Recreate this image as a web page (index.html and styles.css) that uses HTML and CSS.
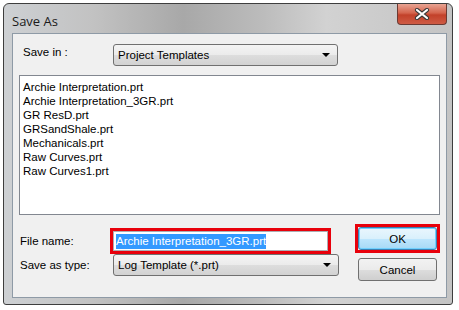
FILE: index.html
```html
<!DOCTYPE html>
<html lang="en">

<head>
  <meta charset="UTF-8">
  <title>Save As</title>
  <link rel="stylesheet" href="styles.css">
</head>

<body>
  <div class="window">
    <div class="titlebar">
      <span class="title">Save As</span>
      <div class="close-btn">
        <svg width="16" height="12" viewBox="0 0 16 12">
          <path d="M3 2 L13 10 M13 2 L3 10" stroke="#3a3a3a" stroke-width="4.2" stroke-linecap="round" />
          <path d="M3 2 L13 10 M13 2 L3 10" stroke="#ffffff" stroke-width="2.2" stroke-linecap="round" />
        </svg>
      </div>
    </div>

    <div class="client">
      <div class="save-in">
        <span class="label save-in-label">Save in :</span>
        <div class="combo combo-wide">
          <span>Project Templates</span>
          <span class="arrow"></span>
        </div>
      </div>

      <div class="file-list">
        <div class="item">Archie Interpretation.prt</div>
        <div class="item">Archie Interpretation_3GR.prt</div>
        <div class="item">GR ResD.prt</div>
        <div class="item">GRSandShale.prt</div>
        <div class="item">Mechanicals.prt</div>
        <div class="item">Raw Curves.prt</div>
        <div class="item">Raw Curves1.prt</div>
      </div>

      <div class="bottom">
        <div class="fields">
          <div class="field-row">
            <span class="label">File name:</span>
            <div class="textbox marked"><span class="selected">Archie Interpretation_3GR.prt</span></div>
          </div>
          <div class="field-row">
            <span class="label">Save as type:</span>
            <div class="combo">
              <span>Log Template (*.prt)</span>
              <span class="arrow"></span>
            </div>
          </div>
        </div>
        <div class="buttons">
          <div class="marked-btn"><div class="btn btn-default">OK</div></div>
          <div class="btn">Cancel</div>
        </div>
      </div>
    </div>
  </div>
</body>

</html>
```

FILE: styles.css
```css
body {
  margin: 0;
  padding: 3px;
  background: #ffffff;
  font-family: 'Liberation Sans', Arial, sans-serif;
  font-size: 11.5px;
  color: #000;
}

.window {
  width: 435px;
  height: 294px;
  border: 1px solid #3e3e3e;
  border-radius: 6px 6px 3px 3px;
  background: linear-gradient(90deg, #cdd0d3 0%, #c2c2c2 20%, #a8a8a8 40%, #bcbcbc 58%, #d2d2d2 72%, #c4c4c4 100%);
  padding: 0 5px 6px 8px;
  display: flex;
  flex-direction: column;
}

.titlebar {
  height: 29px;
  display: flex;
  align-items: flex-start;
  justify-content: space-between;
}

.title {
  font-family: 'Open Sans', sans-serif;
  font-size: 13px;
  color: #1a1a1a;
  margin-top: 8px;
}

.close-btn {
  width: 48px;
  height: 20px;
  border: 1px solid #6b3a33;
  border-top: none;
  border-radius: 0 0 4px 4px;
  background: linear-gradient(180deg, #e8a493 0%, #d4644d 45%, #c2412a 55%, #cf5b44 100%);
  display: flex;
  align-items: center;
  justify-content: center;
}

.client {
  flex: 1;
  border: 1px solid #8e9aa6;
  background: #f0f0f0;
  padding: 10px 6px 0 6px;
}

.save-in {
  display: flex;
  align-items: center;
  height: 22px;
}

.label {
  color: #000;
}

.save-in-label {
  width: 90px;
  padding-left: 4px;
  margin-top: -6px;
}

.combo {
  width: 213px;
  height: 20px;
  border: 1px solid #707070;
  border-radius: 3px;
  background: linear-gradient(180deg, #f4f4f4 0%, #ebebeb 50%, #dddddd 51%, #d2d2d2 100%);
  display: flex;
  align-items: center;
  justify-content: space-between;
  padding: 0 7px 0 4px;
}

.combo-wide {
  width: 212px;
}

.arrow {
  width: 0;
  height: 0;
  border-left: 4px solid transparent;
  border-right: 4px solid transparent;
  border-top: 4px solid #000;
}

.file-list {
  margin-top: 9px;
  height: 134px;
  border: 1px solid #828790;
  background: #fff;
  padding: 4px 3px 0 3px;
}

.item {
  height: 14px;
  line-height: 14px;
}

.bottom {
  display: flex;
  margin-top: 14px;
}

.fields {
  width: 339px;
}

.field-row {
  display: flex;
  align-items: center;
  height: 24px;
}

.field-row .label {
  width: 93px;
  padding-left: 1px;
}

.textbox {
  width: 209px;
  height: 18px;
  border: 1px solid #abadb3;
  background: #fff;
  padding: 0 2px;
  display: flex;
  align-items: center;
}

.marked {
  outline: 3px solid #e8000b;
}

.selected {
  background: #3399ff;
  color: #fff;
  line-height: 15px;
}

.buttons {
  display: flex;
  flex-direction: column;
  gap: 8px;
  margin-top: -2px;
}

.marked-btn {
  outline: 3px solid #e8000b;
}

.btn {
  width: 77px;
  height: 21px;
  border: 1px solid #707070;
  border-radius: 3px;
  background: linear-gradient(180deg, #f2f2f2 0%, #ebebeb 50%, #dddddd 51%, #cfcfcf 100%);
  display: flex;
  align-items: center;
  justify-content: center;
}

.btn-default {
  border-color: #3c7fb1;
  background: linear-gradient(180deg, #eaf6fd 0%, #d9f0fc 50%, #bee6fd 51%, #a7d9f5 100%);
  box-shadow: inset 0 0 0 1px #6fd0ff;
}
```
